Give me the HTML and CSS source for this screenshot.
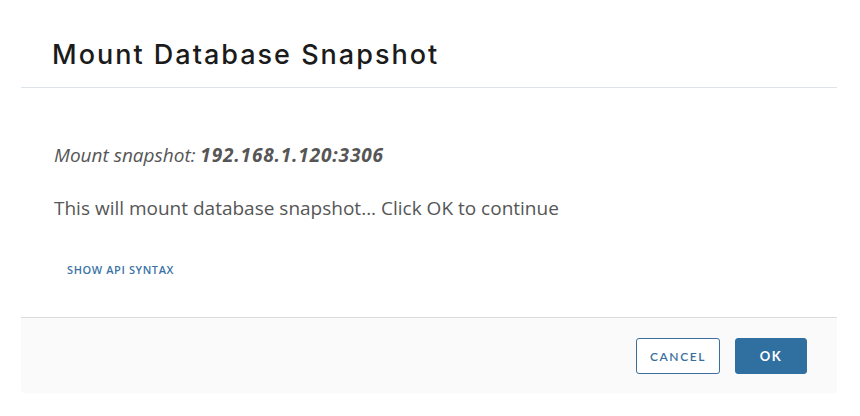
FILE: index.html
```html
<!DOCTYPE html>
<html>
<head>
<meta charset="utf-8">
<link rel="stylesheet" href="styles.css">
</head>
<body>
<div class="modal">
  <div class="modal-header">
    <h3 class="modal-title">Mount Database Snapshot</h3>
  </div>
  <div class="modal-body">
    <p class="target"><em>Mount snapshot: <strong>192.168.1.120:3306</strong></em></p>
    <p class="message">This will mount database snapshot... Click OK to continue</p>
    <button class="link-btn">SHOW API SYNTAX</button>
  </div>
  <div class="modal-footer">
    <button class="btn btn-outline">CANCEL</button>
    <button class="btn btn-primary">OK</button>
  </div>
</div>
</body>
</html>
```
FILE: styles.css
```css
* { box-sizing: border-box; }
html, body { margin: 0; padding: 0; background: #fff; }
body { width: 860px; height: 416px; overflow: hidden; }

.modal {
  margin-left: 21px;
  width: 816px;
  background: #fff;
}

.modal-header {
  height: 88px;
  border-bottom: 1px solid #dde3e8;
  padding: 37px 0 0 31px;
}

.modal-title {
  margin: 0;
  font-family: "Inter", sans-serif;
  font-weight: 500;
  font-size: 27px;
  line-height: 36px;
  color: #1b1b1b;
  letter-spacing: 2px;
}

.modal-body {
  height: 229px;
  padding: 55px 0 0 33px;
  font-family: "Open Sans", sans-serif;
  color: #565656;
}

.target {
  margin: 0;
  font-size: 19px;
  line-height: 24px;
}
.target strong { font-weight: 700; letter-spacing: 0.85px; }

.message {
  margin: 29px 0 0;
  font-size: 19px;
  line-height: 24px;
}

.link-btn {
  display: block;
  margin: 42px 0 0 13px;
  padding: 0;
  border: none;
  background: none;
  font-family: "Open Sans", sans-serif;
  font-weight: 600;
  font-size: 11px;
  line-height: 16px;
  letter-spacing: 0.6px;
  color: #3b73a6;
}

.modal-footer {
  height: 76px;
  background: #fafafa;
  border-top: 1px solid #dddddd;
  border-radius: 0 0 4px 4px;
  display: flex;
  justify-content: flex-end;
  align-items: flex-start;
  gap: 15px;
  padding: 20px 30px 0 0;
}

.btn {
  height: 36px;
  border-radius: 3px;
  font-family: "Lato", sans-serif;
  font-weight: 700;
  font-size: 12px;
  letter-spacing: 1.6px;
  padding: 0;
}
.btn-outline {
  width: 84px;
  background: #fff;
  border: 1px solid #3a6f9c;
  color: #3a6f9c;
  font-weight: 600;
}
.btn-primary {
  width: 72px;
  background: #2f70a1;
  border: 1px solid #2f70a1;
  color: #fff;
  font-size: 13px;
}
```
